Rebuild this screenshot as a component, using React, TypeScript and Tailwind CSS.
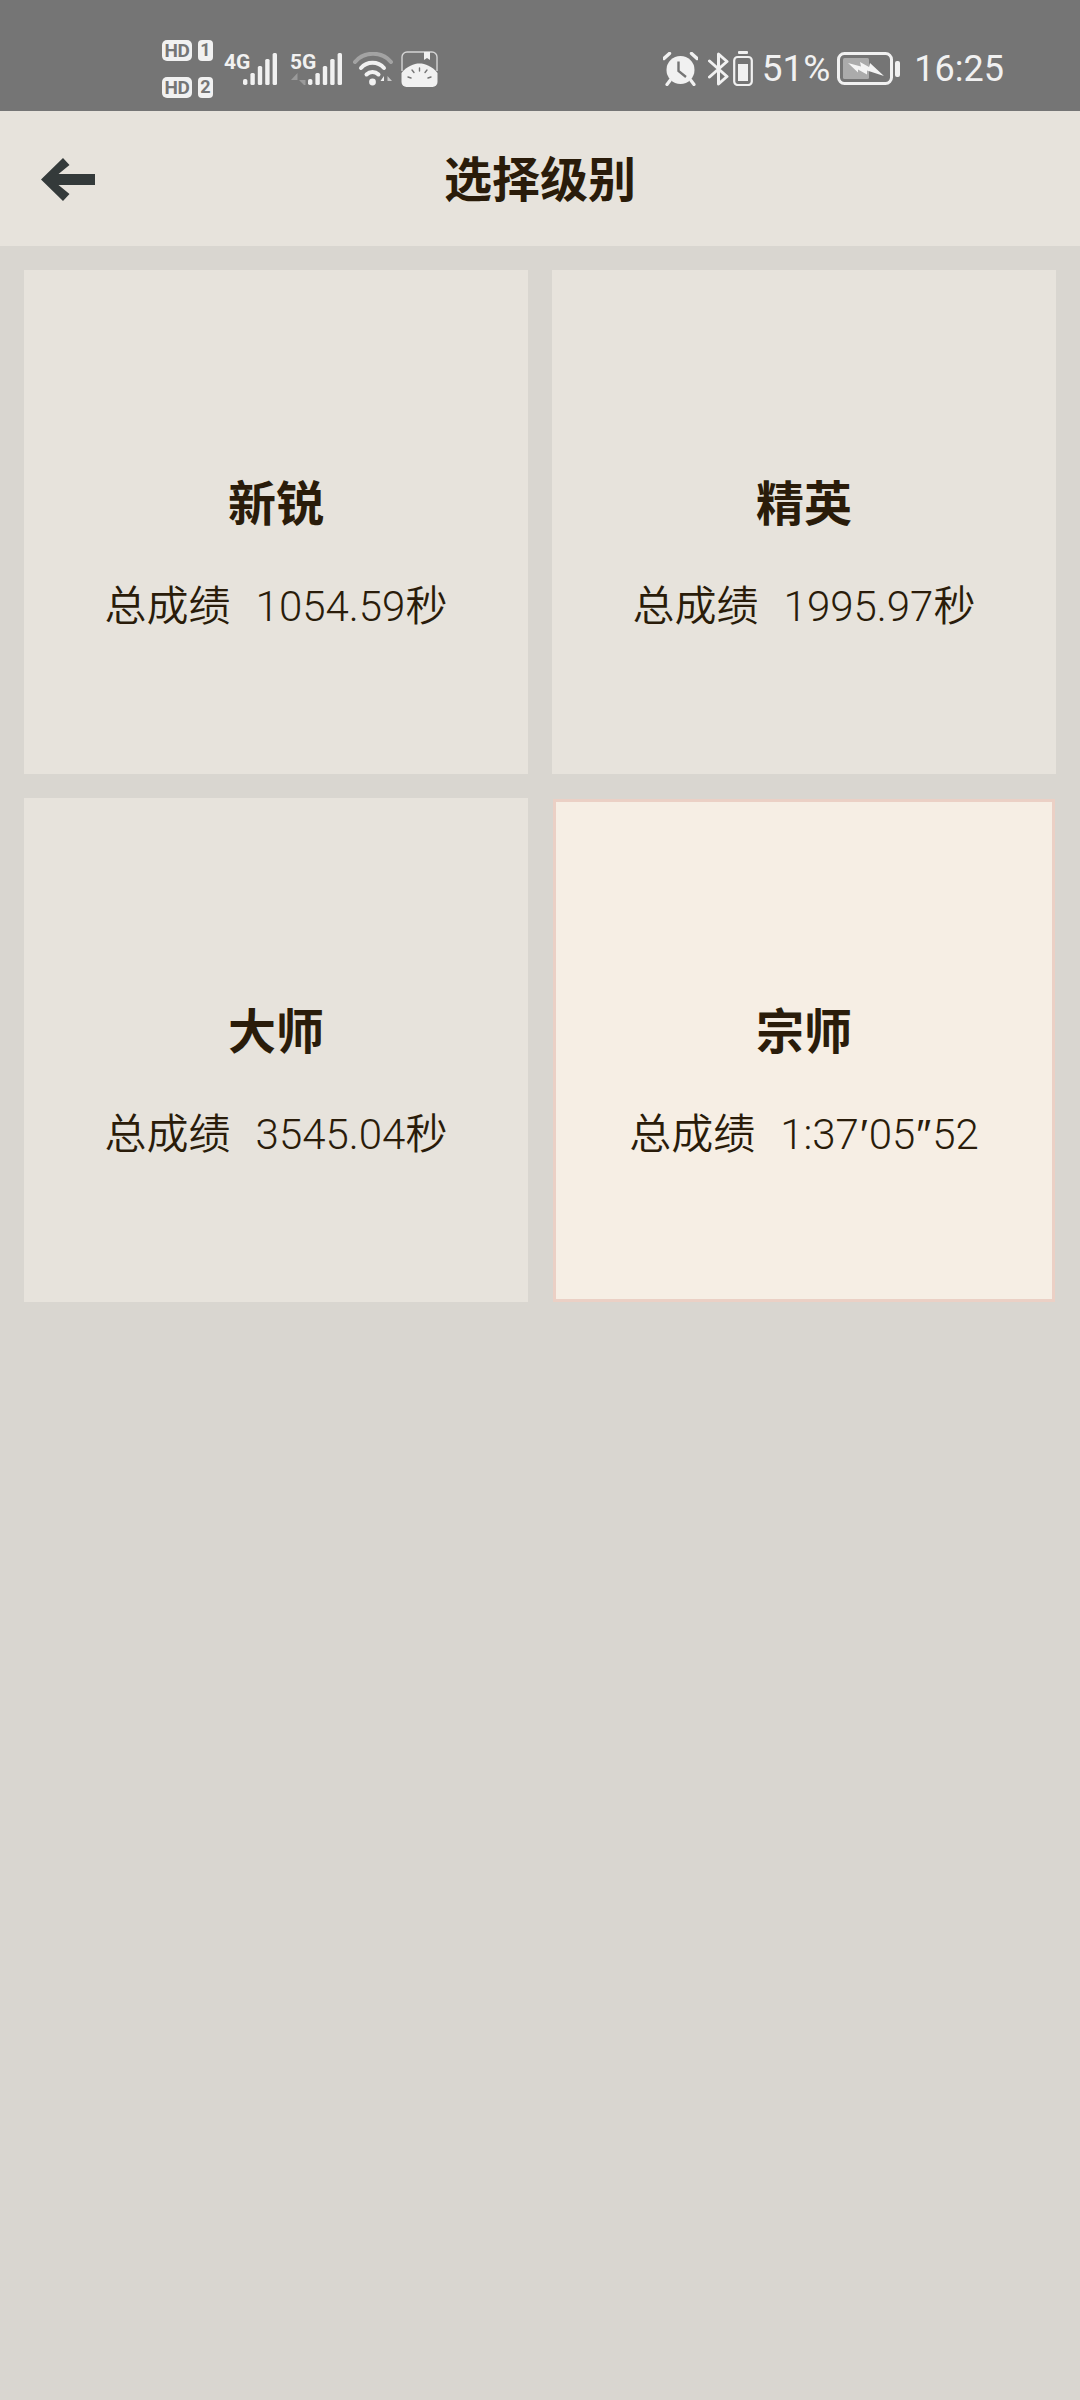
import React from "react";

const FONT = "font-['Roboto','Noto_Sans_CJK_SC',sans-serif]";

function Signal() {
  return (
    <svg width="35" height="32" viewBox="0 0 35 32" fill="#f1f1f1">
      <rect x="0" y="26" width="4.4" height="6" rx="1.8" />
      <rect x="7.4" y="20" width="4.4" height="12" rx="1.5" />
      <rect x="14.8" y="13" width="4.4" height="19" rx="1.5" />
      <rect x="22.2" y="6" width="4.4" height="26" rx="1.5" />
      <rect x="29.6" y="0" width="4.4" height="32" rx="1.5" />
    </svg>
  );
}

function Wifi() {
  return (
    <svg width="41" height="34" viewBox="0 0 41 34" fill="none" strokeLinecap="round">
      <path d="M2 10 C11 -1 29 -1 38 10" stroke="#a3a3a3" strokeWidth="4" />
      <path d="M8 16 C14 9 25 9 31 16" stroke="#f1f1f1" strokeWidth="4" />
      <path d="M13.5 22.5 C17 19 22 19 25.5 22.5" stroke="#f1f1f1" strokeWidth="4" />
      <circle cx="19.5" cy="30" r="3.4" fill="#f1f1f1" />
      <path d="M31 33V24L27.5 29H31" fill="#f1f1f1" />
      <path d="M34.5 33V24L39 29H34.5" fill="#c8c8c8" />
    </svg>
  );
}

function AppIcon() {
  return (
    <svg width="37" height="36" viewBox="0 0 37 36" fill="none">
      <path d="M1 20 V6 A5 5 0 0 1 6 1 H31 A5 5 0 0 1 36 6 V20" stroke="#d4d4d4" strokeWidth="1.4" />
      <path d="M23 1 H29 V9 L26 7 L23 9 Z" fill="#f1f1f1" />
      <path d="M0.5 22 C6 15 13 12.5 18.5 12.5 C24 12.5 31 15 36.5 22 V31 A5 5 0 0 1 31.5 36 H5.5 A5 5 0 0 1 0.5 31 Z" fill="#f1f1f1" />
      <path d="M18.5 17v3M11 19l2 2.5M26 19l-2 2.5M7 26l3 1M30 26l-3 1" stroke="#757575" strokeWidth="1.4" strokeLinecap="round" />
    </svg>
  );
}

function Alarm() {
  return (
    <svg width="35" height="34" viewBox="0 0 35 34" fill="none">
      <circle cx="17.5" cy="18" r="14" fill="#f1f1f1" />
      <path d="M1 6.5 L6.5 1.5" stroke="#f1f1f1" strokeWidth="3.4" strokeLinecap="round" />
      <path d="M34 6.5 L28.5 1.5" stroke="#f1f1f1" strokeWidth="3.4" strokeLinecap="round" />
      <path d="M7 28.5 L4 32.5M28 28.5 L31 32.5" stroke="#f1f1f1" strokeWidth="3.2" strokeLinecap="round" />
      <path d="M15.5 9.5 V19 L23 25" stroke="#757575" strokeWidth="2.4" />
    </svg>
  );
}

function Bluetooth() {
  return (
    <svg width="21" height="34" viewBox="0 0 21 34" fill="none">
      <path d="M1.5 9 L19 24.5 L10.5 32 V2 L19 9.5 L1.5 25" stroke="#f1f1f1" strokeWidth="3" strokeLinejoin="round" strokeLinecap="round" />
    </svg>
  );
}

function MiniBattery() {
  return (
    <svg width="20" height="35" viewBox="0 0 20 35" fill="none">
      <rect x="5" y="0" width="10" height="3" rx="1" fill="#f1f1f1" />
      <rect x="1.2" y="6" width="17.6" height="28" rx="3.5" stroke="#f1f1f1" strokeWidth="2.2" />
      <rect x="5" y="13" width="10" height="17" fill="#f1f1f1" />
    </svg>
  );
}

function Battery() {
  return (
    <svg width="63" height="33" viewBox="0 0 63 33" fill="none">
      <rect x="1.5" y="1.5" width="53" height="30" rx="6" stroke="#f1f1f1" strokeWidth="3" />
      <rect x="6" y="6" width="26" height="21" rx="1.5" fill="#ababab" />
      <path d="M11 11 L24 14.5 L23 10 L32 15 L33 11 L47 24 L30 18.5 L30 22.5 L21 17.5 L21 20.5 Z" fill="#f4f4f4" />
      <rect x="58" y="9" width="5" height="16" rx="2" fill="#f1f1f1" />
    </svg>
  );
}

function Hd({ n }: { n: string }) {
  return (
    <div className="flex items-center gap-[6px]">
      <span className="flex h-[21px] w-[30px] items-center justify-center rounded-[5px] bg-[#f1f1f1] text-[19px] font-bold leading-none tracking-[-0.5px] text-[#757575]">HD</span>
      <span className="flex h-[21px] w-[15px] items-center justify-center rounded-[4px] bg-[#f1f1f1] text-[18px] font-bold leading-none text-[#757575]">{n}</span>
    </div>
  );
}

function Card({ title, children, active }: { title: string; children: React.ReactNode; active?: boolean }) {
  return (
    <div
      className={
        active
          ? "m-[1px] flex h-[503px] flex-col items-center justify-center border-[3px] border-[#ebd0c5] bg-[#f6eee4] pt-[66px]"
          : "flex h-[504px] flex-col items-center justify-center bg-[#e7e3dc] pt-[68px]"
      }
    >
      <div className="text-[48px] font-bold leading-[60px] text-[#2a1c0a]">{title}</div>
      <div className="mt-[42px] flex gap-[25px] text-[42px] font-[350] leading-[60px] text-[#2a1c0a]">
        <span>总成绩</span>
        <span>{children}</span>
      </div>
    </div>
  );
}

export default function App() {
  return (
    <div className={`flex min-h-[2400px] w-[1080px] flex-col bg-[#d9d6d0] ${FONT}`}>
      <div className="flex h-[111px] items-center justify-between bg-[#757575] pl-[162px] pr-[76px] pt-[26px] text-[#f1f1f1]">
        <div className="flex items-center">
          <div className="flex flex-col gap-[16px]">
            <Hd n="1" />
            <Hd n="2" />
          </div>
          <div className="ml-[11px] flex items-end">
            <span className="mb-[13px] w-[19px] font-['Liberation_Sans_Narrow','Roboto',sans-serif] text-[21px] font-bold leading-[20px]">4G</span>
            <Signal />
          </div>
          <div className="relative ml-[12px] flex items-end">
            <span className="mb-[13px] w-[18px] font-['Liberation_Sans_Narrow','Roboto',sans-serif] text-[21px] font-bold leading-[20px]">5G</span>
            <Signal />
            <svg className="absolute bottom-0 left-0" width="17" height="12" viewBox="0 0 17 12" fill="#9a9a9a">
              <path d="M7.5 12V0L1 7H7.5Z" />
              <path d="M9.5 12V0H11L16 5H9.5Z" transform="rotate(180 12.5 6)" />
            </svg>
          </div>
          <div className="ml-[10px]"><Wifi /></div>
          <div className="ml-[7px]"><AppIcon /></div>
        </div>
        <div className="flex items-center">
          <Alarm />
          <div className="ml-[10px]"><Bluetooth /></div>
          <div className="ml-[4px]"><MiniBattery /></div>
          <span className="ml-[9px] text-[37px] font-normal leading-none">51%</span>
          <div className="ml-[7px]"><Battery /></div>
          <span className="ml-[14px] text-[36px] font-normal leading-none">16:25</span>
        </div>
      </div>

      <div className="relative flex h-[135px] items-center justify-center bg-[#e7e3dc] pt-[5px]">
        <svg className="absolute left-[41px] top-[47px]" width="54" height="43" viewBox="0 0 54 43" fill="#343a3a">
          <path d="M0 21.5 L22 0 L28.5 7 L17.5 16 H54 V27 H17.5 L28.5 36 L22 43 Z" />
        </svg>
        <h1 className="text-[48px] font-bold leading-none text-[#2a1c0a]">选择级别</h1>
      </div>

      <div className="grid grid-cols-2 gap-[24px] p-[24px]">
        <Card title="新锐">1054.59秒</Card>
        <Card title="精英">1995.97秒</Card>
        <Card title="大师">3545.04秒</Card>
        <Card title="宗师" active>
          1:37<span className="mx-[1px] font-['DejaVu_Sans',sans-serif] font-light">′</span>05<span className="mx-[1px] font-['DejaVu_Sans',sans-serif] font-light">″</span>52
        </Card>
      </div>
    </div>
  );
}
